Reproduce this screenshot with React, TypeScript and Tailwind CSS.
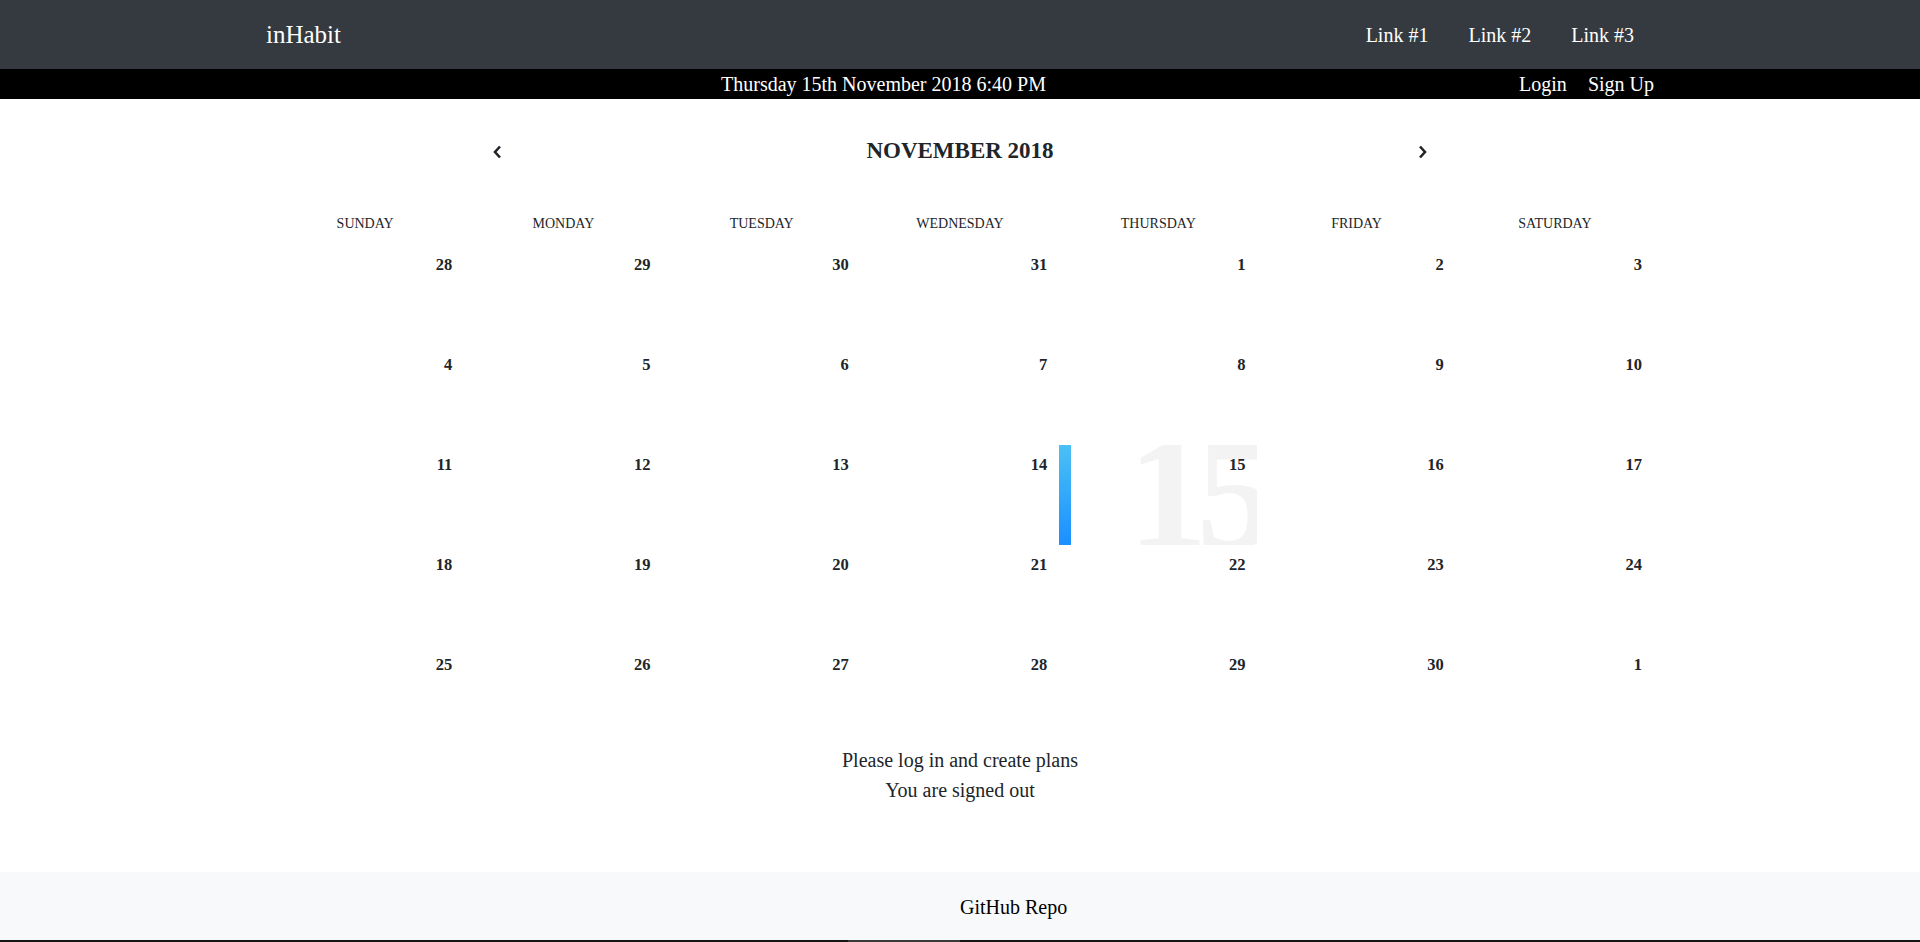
import React from 'react';

const weekDays = ['Sunday', 'Monday', 'Tuesday', 'Wednesday', 'Thursday', 'Friday', 'Saturday'];

// november 2018 grid, with the spill-over days from oct / dec
const days: number[] = [28, 29, 30, 31];
for (let d = 1; d <= 30; d++) days.push(d);
days.push(1);

const TODAY_INDEX = 4 + 14; // 15th

function Chevron({ dir }: { dir: 'left' | 'right' }) {
  return (
    <svg width="9" height="14" viewBox="0 0 9 14" className="mt-[3px]">
      <polyline
        points={dir === 'left' ? '7,1.5 2,7 7,12.5' : '2,1.5 7,7 2,12.5'}
        fill="none"
        stroke="#212529"
        strokeWidth="2.6"
        strokeLinejoin="miter"
      />
    </svg>
  );
}

function Cell({ day, today }: { day: number; today: boolean }) {
  return (
    <div className="relative h-[100px] overflow-hidden">
      {today && (
        <>
          <span className="absolute top-[-32px] right-[-8px] text-[160px] leading-none font-bold tracking-[-0.07em] text-[#f3f3f3] select-none">
            {day}
          </span>
          <div className="absolute left-0 inset-y-0 w-[12px] bg-gradient-to-t from-[#1a8fff] to-[#4bc0f4]" />
        </>
      )}
      <span className="absolute top-[12px] right-[12px] text-[16.5px] leading-none font-bold">{day}</span>
    </div>
  );
}

export default function App() {
  return (
    <div
      className="min-h-screen flex flex-col bg-white text-[#212529]"
      style={{ fontFamily: '"Liberation Serif", "Times New Roman", serif' }}
    >
      <nav className="h-[69px] bg-[#343a40]">
        <div className="w-[1388px] mx-auto h-full flex items-center justify-between">
          <span className="text-[25px] leading-[37px] text-white">inHabit</span>
          <div className="flex text-[20px] leading-[30px] text-white">
            <a className="px-[20px]">Link #1</a>
            <a className="px-[20px]">Link #2</a>
            <a className="px-[20px]">Link #3</a>
          </div>
        </div>
      </nav>

      <div className="h-[30px] bg-black text-white text-[20px] leading-[30px]">
        <div className="w-[1388px] mx-auto flex">
          <div className="w-[1235px] text-center">Thursday 15th November 2018 6:40 PM</div>
          <div className="flex-1 flex justify-end gap-[21px]">
            <span>Login</span>
            <span>Sign Up</span>
          </div>
        </div>
      </div>

      <main className="w-[1388px] mx-auto">
        <div className="grid grid-cols-3 items-center py-[34.5px] text-[23px] leading-[34.5px] font-bold uppercase">
          <div className="flex justify-center">
            <Chevron dir="left" />
          </div>
          <div className="text-center">November 2018</div>
          <div className="flex justify-center">
            <Chevron dir="right" />
          </div>
        </div>

        <div className="grid grid-cols-7 py-[10.5px] text-[14px] leading-[21px] uppercase text-center">
          {weekDays.map((d) => (
            <div key={d}>{d}</div>
          ))}
        </div>

        <div className="grid grid-cols-7">
          {days.map((d, i) => (
            <Cell key={i} day={d} today={i === TODAY_INDEX} />
          ))}
        </div>
      </main>

      <div className="text-center text-[20px] leading-[30px]">
        <p>Please log in and create plans</p>
        <p>You are signed out</p>
      </div>

      <footer className="mt-auto">
        <div className="h-[68px] bg-[#f8f9fa] grid grid-cols-2 pt-[20px] text-[20px] leading-[30px] text-black">
          <div />
          <div>GitHub Repo</div>
        </div>
        <div className="h-[2px] bg-[#141414] flex">
          <div className="w-[848px]" />
          <div className="w-[112px] bg-[#3a3a3a]" />
        </div>
      </footer>
    </div>
  );
}
